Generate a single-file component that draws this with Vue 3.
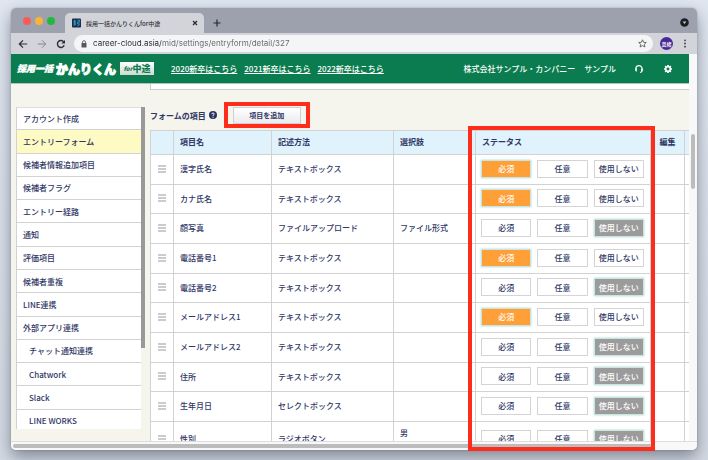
<script setup>
import { ref } from 'vue'

const url = ref('career-cloud.asia/mid/settings/entryform/detail/327')

const years = ['2020新卒はこちら', '2021新卒はこちら', '2022新卒はこちら']

const menu = [
  { label: 'アカウント作成' },
  { label: 'エントリーフォーム', active: true },
  { label: '候補者情報追加項目' },
  { label: '候補者フラグ' },
  { label: 'エントリー経路' },
  { label: '通知' },
  { label: '評価項目' },
  { label: '候補者重複' },
  { label: 'LINE連携' },
  { label: '外部アプリ連携' },
  { label: 'チャット通知連携', sub: true },
  { label: 'Chatwork', sub: true },
  { label: 'Slack', sub: true },
  { label: 'LINE WORKS', sub: true },
]

const options = ['必須', '任意', '使用しない']

const rows = ref([
  { name: '漢字氏名', type: 'テキストボックス', choice: '', status: '必須' },
  { name: 'カナ氏名', type: 'テキストボックス', choice: '', status: '必須' },
  { name: '顔写真', type: 'ファイルアップロード', choice: 'ファイル形式', status: '使用しない' },
  { name: '電話番号1', type: 'テキストボックス', choice: '', status: '必須' },
  { name: '電話番号2', type: 'テキストボックス', choice: '', status: '使用しない' },
  { name: 'メールアドレス1', type: 'テキストボックス', choice: '', status: '必須' },
  { name: 'メールアドレス2', type: 'テキストボックス', choice: '', status: '使用しない' },
  { name: '住所', type: 'テキストボックス', choice: '', status: '使用しない' },
  { name: '生年月日', type: 'セレクトボックス', choice: '', status: '使用しない' },
  { name: '性別', type: 'ラジオボタン', choice: '男', status: '使用しない' },
])
</script>

<template>
  <div class="desktop">
    <div class="window">
      <div class="tabbar">
        <div class="lights"><i class="red"></i><i class="yellow"></i><i class="green"></i></div>
        <div class="tab">
          <svg class="favicon" viewBox="0 0 10 10" aria-hidden="true">
            <rect width="10" height="10" rx="1" fill="#1d2c4d" />
            <path d="M1.500 3h3M3 1.500v5.500M1.500 5h3M1.500 7.500l3-1M6 2h2.500v2H6v2h2.500M6 8.300l2.500-1.500" fill="none" stroke="#35b3d6" stroke-width=".9" />
          </svg>
          <span class="tab-title">採用一括かんりくんfor中途</span>
          <button class="bare" aria-label="タブを閉じる">
            <svg width="6" height="6" viewBox="0 0 6 6"><path d="M1 1l4 4M5 1L1 5" stroke="#26282c" stroke-width="1.200" /></svg>
          </button>
        </div>
        <button class="bare plus" aria-label="新しいタブ">
          <svg width="8" height="8" viewBox="0 0 8 8"><path d="M4 .5v7M.5 4h7" stroke="#26282c" stroke-width="1.200" /></svg>
        </button>
        <button class="bare tab-search" aria-label="タブを検索">
          <svg width="9" height="9" viewBox="0 0 9 9"><circle cx="4.500" cy="4.500" r="4.300" fill="#1d1e21" /><path d="M2.600 3.600h3.800L4.500 6z" fill="#c8cad2" /></svg>
        </button>
      </div>

      <div class="toolbar">
        <div class="nav-buttons">
          <button class="bare" aria-label="戻る">
            <svg width="10" height="10" viewBox="0 0 10 10"><path d="M9.200 5H1.500M5 1.300L1.300 5 5 8.700" fill="none" stroke="#2c2e32" stroke-width="1.200" /></svg>
          </button>
          <button class="bare" aria-label="進む">
            <svg width="10" height="10" viewBox="0 0 10 10"><path d="M.8 5h7.700M5 1.300L8.700 5 5 8.700" fill="none" stroke="#85878d" stroke-width="1" /></svg>
          </button>
          <button class="bare" aria-label="再読み込み">
            <svg width="10" height="10" viewBox="0 0 10 10"><path d="M8.200 6.300A3.500 3.500 0 1 1 7.800 2.900" fill="none" stroke="#2c2e32" stroke-width="1.400" /><path d="M9 .9v3.700H5.300z" fill="#2c2e32" /></svg>
          </button>
        </div>
        <div class="address">
          <svg width="6" height="8" viewBox="0 0 6 8" aria-hidden="true"><rect x=".5" y="3" width="5" height="4.500" rx=".6" fill="#55585e" /><path d="M1.500 3.200V2.200a1.500 1.500 0 0 1 3 0v1" fill="none" stroke="#55585e" stroke-width=".9" /></svg>
          <input v-model="url" type="text" aria-label="アドレス" spellcheck="false" />
          <button class="bare" aria-label="ブックマーク">
            <svg width="9" height="9" viewBox="0 0 9 9"><path d="M4.500.8l1.100 2.500 2.700.2-2 1.800.6 2.700-2.400-1.400L2.100 8l.6-2.700-2-1.800 2.700-.2z" fill="none" stroke="#4a4c51" stroke-width=".8" /></svg>
          </button>
        </div>
        <button class="avatar">真緒</button>
        <button class="bare" aria-label="メニュー">
          <svg width="4" height="9" viewBox="0 0 4 9"><g fill="#3c3e43"><circle cx="2" cy="1.300" r=".9" /><circle cx="2" cy="4.500" r=".9" /><circle cx="2" cy="7.700" r=".9" /></g></svg>
        </button>
      </div>

      <div class="viewport">
        <div class="page">
          <header class="site-header">
            <a class="logo" href="#">
              <span class="logo-small">採用一括</span>
              <span class="logo-big">かんりくん</span>
              <span class="logo-badge"><em>for</em>中途</span>
            </a>
            <nav class="years">
              <a v-for="y in years" :key="y" href="#">{{ y }}</a>
            </nav>
            <div class="account">
              <span>株式会社サンプル・カンパニー</span>
              <span>サンプル</span>
            </div>
            <button class="bare" aria-label="サポート">
              <svg width="10" height="10" viewBox="0 0 10 10"><path d="M1.900 6.200V4.800a3.100 3.100 0 0 1 6.200 0v1.400q0 2-2 2.300" fill="none" stroke="#fff" stroke-width="1.200" /><path d="M1.300 4.600h1.500v2.800H2q-.7-.3-.7-1.400zM7.200 4.600h1.500v1.600q0 1-.7 1.400h-.8z" fill="#fff" /></svg>
            </button>
            <button class="bare gear" aria-label="設定">
              <svg width="10" height="10" viewBox="0 0 10 10"><circle cx="5" cy="5" r="2.300" fill="none" stroke="#fff" stroke-width="1.700" /><path d="M5 1v1.500M5 7.500V9M1 5h1.500M7.500 5H9M2.200 2.200l1 1M6.800 6.800l1 1M7.800 2.200l-1 1M3.200 6.800l-1 1" stroke="#fff" stroke-width="1.700" /></svg>
            </button>
          </header>

          <div class="body">
            <aside class="sidebar">
              <nav class="menu">
                <a v-for="m in menu" :key="m.label" href="#" :class="{ active: m.active, sub: m.sub }">{{ m.label }}</a>
              </nav>
              <div class="side-track"><div class="side-thumb"></div></div>
            </aside>

            <main class="content">
              <div class="panel-end"></div>
              <div class="section-head">
                <h1>フォームの項目</h1>
                <svg width="8" height="8" viewBox="0 0 8 8" aria-hidden="true"><circle cx="4" cy="4" r="4" fill="#2b335f" /><path d="M2.700 3.200Q2.800 2 4 2t1.300 1.100Q5.300 3.700 4 4.300V5" fill="none" stroke="#fff" stroke-width=".9" /><circle cx="4" cy="6.200" r=".6" fill="#fff" /></svg>
                <div class="add-wrap"><button class="add">項目を追加</button></div>
              </div>
              <table>
                <colgroup>
                  <col class="c-handle" /><col class="c-name" /><col class="c-type" /><col class="c-choice" /><col class="c-status" /><col class="c-edit" /><col />
                </colgroup>
                <thead>
                  <tr>
                    <th></th><th>項目名</th><th>記述方法</th><th>選択肢</th><th>ステータス</th><th class="center">編集</th><th></th>
                  </tr>
                </thead>
                <tbody>
                  <tr v-for="r in rows" :key="r.name">
                    <td class="center">
                      <svg width="8" height="8" viewBox="0 0 8 8" aria-hidden="true"><path d="M0 1h8M0 4h8M0 7h8" stroke="#999" stroke-width="1" /></svg>
                    </td>
                    <td>{{ r.name }}</td>
                    <td>{{ r.type }}</td>
                    <td class="choice">{{ r.choice }}</td>
                    <td class="status-cell">
                      <div class="status">
                        <button
                          v-for="(o, i) in options"
                          :key="o"
                          :class="{ on: r.status === o, off: i === 2 }"
                          :aria-pressed="r.status === o"
                          @click="r.status = o"
                        >{{ o }}</button>
                      </div>
                    </td>
                    <td></td>
                    <td></td>
                  </tr>
                </tbody>
              </table>
            </main>
          </div>
        </div>
        <div class="v-track"><div class="v-thumb"></div></div>
      </div>
      <div class="h-track"><div class="h-thumb"></div></div>
    </div>
    <div class="highlight"></div>
  </div>
</template>

<style>
body {
  margin: 0;
}
</style>

<style scoped>
* {
  box-sizing: border-box;
}
.desktop {
  position: relative;
  display: flex;
  height: 100vh;
  padding: 8px 11px 10px;
  overflow: hidden;
  background: linear-gradient(#dfe6f0, #d3dae4);
  font: 500 8px/13px "Noto Sans CJK JP", sans-serif;
  color: #2f3766;
}
.window {
  flex: 1;
  min-width: 0;
  display: flex;
  flex-direction: column;
  overflow: hidden;
  border-radius: 5px;
  background: #f8f8f8;
  box-shadow: 0 7px 16px rgba(30, 38, 50, 0.45), 0 0 2px rgba(30, 38, 50, 0.3);
}
button {
  font: inherit;
  color: inherit;
  padding: 0;
  margin: 0;
  cursor: pointer;
}
a {
  color: inherit;
  text-decoration: none;
}
svg {
  display: block;
  flex: none;
}
.bare {
  border: 0;
  background: none;
}

/* browser frame */
.tabbar {
  display: flex;
  height: 25px;
  flex: none;
  align-items: flex-end;
  padding: 0 8px 0 12px;
  background: #9da1ae;
}
.lights {
  display: flex;
  gap: 4px;
  padding-bottom: 8px;
}
.lights i {
  width: 8px;
  height: 8px;
  border-radius: 50%;
}
.red {
  background: #fb5b56;
}
.yellow {
  background: #fbb334;
}
.green {
  background: #21b83c;
}
.tab {
  display: flex;
  align-items: center;
  width: 139px;
  height: 20px;
  margin-left: 10px;
  padding: 0 6px 0 7px;
  border-radius: 5px 5px 0 0;
  background: #d3d4da;
}
.favicon {
  width: 9px;
  height: 10px;
}
.tab-title {
  flex: 1;
  padding-left: 5px;
  font-size: 6px;
  color: #2c2e33;
  white-space: nowrap;
}
.plus {
  margin: 0 auto 6px 9px;
}
.tab-search {
  margin-bottom: 6px;
}
.toolbar {
  display: flex;
  flex: none;
  align-items: center;
  height: 21px;
  padding-right: 10px;
  background: #d3d4da;
}
.nav-buttons {
  display: flex;
  gap: 9px;
  padding: 0 8px 0 7px;
}
.address {
  flex: 1;
  display: flex;
  align-items: center;
  gap: 6px;
  height: 17px;
  padding: 0 6px 0 7px;
  border-radius: 9px;
  background: #f4f5f7;
}
.address input {
  flex: 1;
  min-width: 0;
  padding: 0;
  border: 0;
  outline: 0;
  font: 8px/13px Inter, sans-serif;
  color: transparent;
  background: linear-gradient(90deg, #25272b 68px, #63656b 68px) text;
}
.avatar {
  width: 13px;
  height: 13px;
  margin: 0 10px 0 7px;
  border: 0;
  border-radius: 50%;
  background: #4a2796;
  color: #fff;
  font-size: 5px;
  line-height: 13px;
}

/* page */
.viewport {
  flex: 1;
  min-height: 0;
  display: flex;
}
.page {
  flex: 1;
  min-width: 0;
  display: flex;
  flex-direction: column;
  background: #f5f5ed;
}
.site-header {
  display: flex;
  flex: none;
  align-items: center;
  height: 30px;
  padding: 0 16px 0 6px;
  background: #0a7c50;
  border-bottom: 1px solid #aac4b6;
  color: #fff;
  white-space: nowrap;
}
.logo {
  display: flex;
  align-items: center;
  font-weight: 900;
}
.logo-small {
  font-size: 9px;
  font-style: italic;
  padding-right: 3px;
  -webkit-text-stroke: 0.4px #fff;
}
.logo-big {
  font-size: 12px;
  -webkit-text-stroke: 1px #fff;
}
.logo-badge {
  display: flex;
  align-items: center;
  justify-content: center;
  width: 34px;
  height: 13px;
  margin-left: 4px;
  background: linear-gradient(#fff, #cfd8d3);
  color: #0a7c50;
  font-size: 9px;
}
.logo-badge em {
  font-size: 6px;
}
.years {
  display: flex;
  gap: 7px;
  margin-left: 17px;
}
.years a {
  text-decoration: underline;
  text-underline-offset: 1px;
}
.account {
  display: flex;
  gap: 9px;
  margin: 0 18px 0 auto;
}
.gear {
  margin-left: 19px;
}
.body {
  flex: 1;
  min-height: 0;
  display: grid;
  grid-template-columns: 129px 1fr;
  grid-template-rows: 100%;
  gap: 5px;
  padding-left: 5px;
}
.sidebar {
  display: grid;
  grid-template-columns: 1fr 4px;
  margin: 23px 0 12px;
  overflow: hidden;
}
.menu {
  display: grid;
  grid-auto-rows: 1fr;
  min-height: 326px;
  border-left: 1px solid #d2d2d2;
  background: #fff;
}
.menu a {
  display: flex;
  align-items: center;
  padding-left: 6px;
  border-bottom: 1px solid #d2d2d2;
}
.menu a:first-child {
  border-top: 1px solid #dedede;
}
.menu .active {
  background: #fefac3;
}
.menu .sub {
  padding-left: 12px;
}
.side-thumb {
  height: 241px;
  background: #999;
}
.content {
  min-width: 0;
  overflow: hidden;
}
.panel-end {
  height: 6px;
  border: solid #ccc;
  border-width: 0 0 1px 1px;
  background: #fff;
}
.section-head {
  display: flex;
  align-items: center;
  height: 40px;
  padding: 12px 0 2px;
}
h1 {
  margin: 0 3px 0 0;
  font-size: 8px;
  font-weight: 700;
}
.add-wrap {
  margin-left: 7px;
  padding: 1px 5px 0;
  border: 4px solid #fe2c1b;
}
.add {
  display: block;
  width: 68px;
  height: 17px;
  border: 1px solid #d0d0d4;
  background: linear-gradient(#fff, #ebebef);
  font-size: 7px;
  font-weight: 700;
  line-height: 13px;
}
table {
  width: 100%;
  table-layout: fixed;
  border-collapse: separate;
  border-spacing: 0;
}
.c-handle {
  width: 23px;
}
.c-name {
  width: 98px;
}
.c-type {
  width: 122px;
}
.c-choice {
  width: 82px;
}
.c-status {
  width: 175px;
}
.c-edit {
  width: 34px;
}
th,
td {
  padding: 0 6px 2px;
  border: solid #d2d2d2;
  border-width: 0 0 1px 1px;
  text-align: left;
  vertical-align: middle;
  white-space: nowrap;
}
th {
  height: 25px;
  border-top-width: 1px;
  background: #e0f3fd;
}
td {
  height: 30px;
  background: #fff;
}
.status-cell {
  padding-left: 5px;
}
tr:nth-child(3n + 2) td {
  height: 29px;
}
tr:last-child td {
  height: 36px;
}
tr:last-child .choice {
  padding-top: 4px;
  vertical-align: top;
}
th:last-child,
td:last-child {
  padding: 0;
}
.center {
  padding: 0 0 2px;
  text-align: center;
}
.center svg {
  margin: 0 auto;
}
.status {
  display: grid;
  grid-template-columns: repeat(3, 1fr);
  gap: 6px;
}
.status button {
  height: 18px;
  border: 1px solid #d4d4d6;
  background: #fff;
}
.status .on {
  border-color: #cfe3d8;
  background: #ff9f38;
  color: #fff;
  box-shadow: 0 0 2px #8fd8dc;
}
.status .on.off {
  background: #9b9b9b;
}

/* scrollbars */
.v-track {
  width: 8px;
  padding: 80px 2px 0;
  background: #f8f8f8;
}
.v-thumb {
  height: 55px;
  border-radius: 2px;
  background: #bcbcbc;
}
.h-track {
  flex: none;
  height: 9px;
  padding: 2px 44px 0 2px;
  border-top: 1px solid #ddd;
  background: #f8f8f8;
}
.h-thumb {
  height: 4px;
  border-radius: 2px;
  background: #bcbcbc;
}

/* frame laid over the status column */
.highlight {
  position: absolute;
  top: 126px;
  bottom: 9px;
  left: 468px;
  width: 187px;
  border: 4px solid #fe2c1b;
  pointer-events: none;
}
</style>
